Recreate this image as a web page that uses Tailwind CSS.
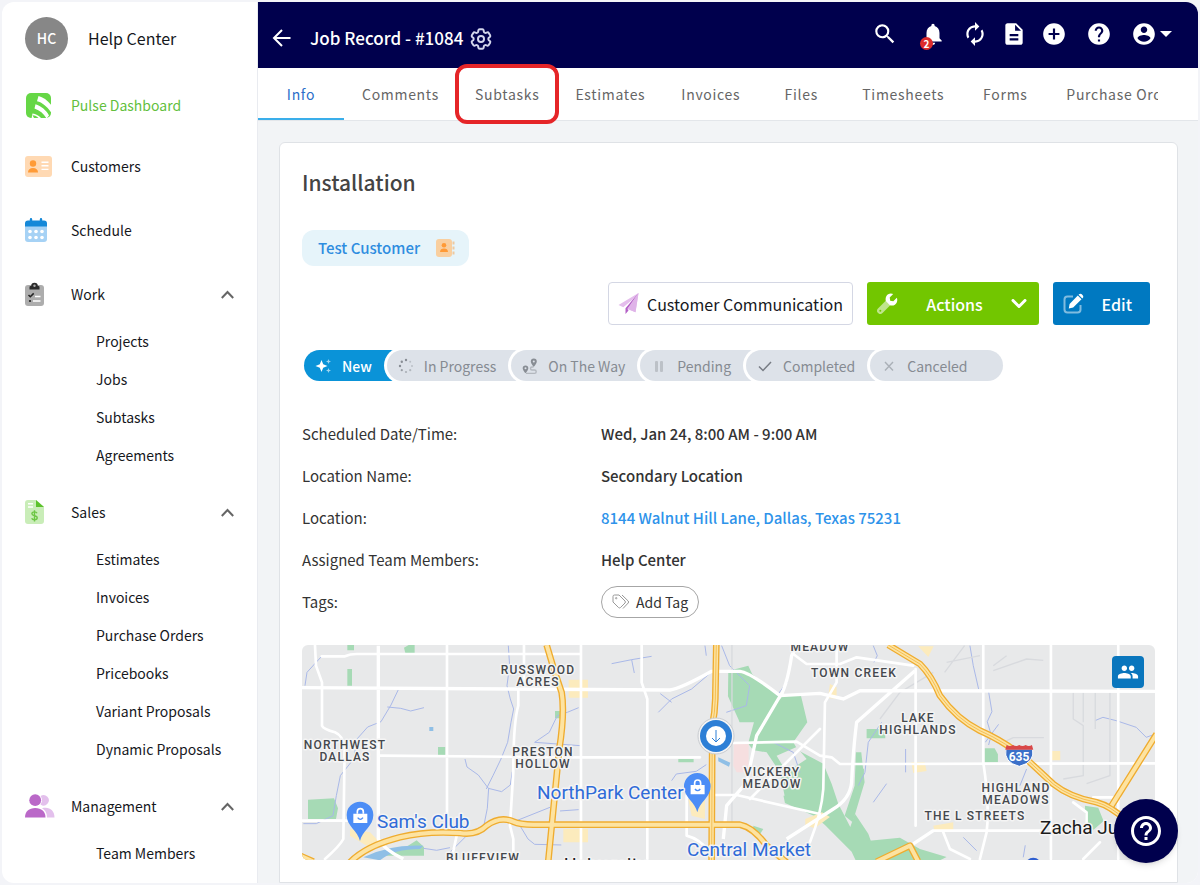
<!DOCTYPE html>
<html lang="en">
<head>
    <meta charset="UTF-8">
    <meta name="viewport" content="width=device-width, initial-scale=1.0">
    <title>Job Record - #1084</title>
    <script src="https://cdn.jsdelivr.net/npm/@tailwindcss/browser@4"></script>
</head>
<body class="bg-[#f3f4f8] font-['Noto_Sans_CJK_SC',sans-serif] text-[#16181d]">
<div class="h-screen p-[2px]">
    <div class="flex h-full overflow-hidden rounded-xl bg-white">

        <!-- Sidebar -->
        <aside class="w-64 shrink-0 overflow-hidden border-r border-[#e9ebf0]">
            <div class="flex h-[72px] items-center pl-[23px]">
                <div class="flex size-[43px] items-center justify-center rounded-full bg-[#878787] text-sm font-medium text-white">HC</div>
                <span class="ml-5 text-base">Help Center</span>
            </div>

            <a href="#" class="flex h-[62px] items-center pl-[23px] text-sm text-[#63bf3d]">
                <span class="w-[46px] pl-[1px]">
                    <svg class="size-[25px]" viewBox="0 0 25 25">
                        <rect width="25" height="25" rx="5" fill="#66d746"/>
                        <path d="M12.500 3C17 4.200 22 7.500 25.500 12.500V20C21 13.500 16.500 9.500 11 8.300zM9.500 11.300C15 13 20.500 17.500 23 22.500L20.500 25.500C18 21 14 17.500 8.500 15.500zM6.500 20.500C10 21 13 22.500 15.500 25.500H5.500z" fill="#fff"/>
                        <path d="M6.500 22.300C9 22.500 11 23.500 12.500 25H8z" fill="#66d746"/>
                    </svg>
                </span>
                Pulse Dashboard
            </a>

            <nav class="flex flex-col gap-2 pt-[2px] text-sm">
                <a href="#" class="flex h-14 items-center pl-[23px]">
                    <span class="w-[46px]">
                        <svg class="h-[21px] w-[27px]" viewBox="0 0 27 21">
                            <rect width="27" height="21" rx="3" fill="#ffd9b3"/>
                            <circle cx="8" cy="7.500" r="3.200" fill="#ff9b37"/>
                            <path d="M3 16.500C3 13.500 5 12 8 12s5 1.500 5 4.500z" fill="#ff9b37"/>
                            <path d="M16.500 6.200h7M16.500 9.800h7M16.500 13.400h7" stroke="#fff" stroke-width="1.400"/>
                        </svg>
                    </span>
                    Customers
                </a>
                <a href="#" class="flex h-14 items-center pl-[23px]">
                    <span class="w-[46px]">
                        <svg class="h-6 w-[22px]" viewBox="0 0 22 24">
                            <path d="M0 8h22v13a3 3 0 0 1-3 3H3a3 3 0 0 1-3-3z" fill="#a6d2f5"/>
                            <path d="M0 8.500V5.500a3 3 0 0 1 3-3h16a3 3 0 0 1 3 3v3z" fill="#1488d8"/>
                            <path d="M6 1.200v3M16 1.200v3" stroke="#1488d8" stroke-width="2.400" stroke-linecap="round"/>
                            <g fill="#fff"><circle cx="5" cy="13.500" r="1.800"/><circle cx="11" cy="13.500" r="1.800"/><circle cx="17" cy="13.500" r="1.800"/><circle cx="5" cy="19.500" r="1.800"/><circle cx="11" cy="19.500" r="1.800"/><circle cx="17" cy="19.500" r="1.800"/></g>
                        </svg>
                    </span>
                    Schedule
                </a>

                <section class="pb-[2px]">
                    <button type="button" aria-expanded="true" class="flex h-14 w-full items-center pr-[23px] pl-[23px] text-left">
                        <span class="w-[46px]">
                            <svg class="h-6 w-[19px]" viewBox="0 0 19 24">
                                <rect y="3" width="19" height="21" rx="3" fill="#adadad"/>
                                <path d="M4.500 7.500V5a1 1 0 0 1 1-1H6.200a3.300 3.300 0 0 1 6.600 0h.7a1 1 0 0 1 1 1v2.500z" fill="#2b2b2b"/>
                                <circle cx="9.500" cy="3.800" r="1.200" fill="#adadad"/>
                                <path d="M3.500 13l1.800 1.800 3.400-3.400" stroke="#222" stroke-width="1.500" fill="none"/>
                                <circle cx="5" cy="19" r="1.100" fill="#222"/>
                                <path d="M10 14.500h5.500M8 19h7.500" stroke="#fff" stroke-width="1.600"/>
                            </svg>
                        </span>
                        Work
                        <svg class="ml-auto h-[9px] w-[13px]" viewBox="0 0 13 9" fill="none" stroke="#666" stroke-width="2"><path d="M.8 8L6.500 2l5.700 6"/></svg>
                    </button>
                    <ul class="pl-[94px]">
                        <li><a href="#" class="flex h-[38px] items-center">Projects</a></li>
                        <li><a href="#" class="flex h-[38px] items-center">Jobs</a></li>
                        <li><a href="#" class="flex h-[38px] items-center">Subtasks</a></li>
                        <li><a href="#" class="flex h-[38px] items-center">Agreements</a></li>
                    </ul>
                </section>

                <section class="pb-[2px]">
                    <button type="button" aria-expanded="true" class="flex h-14 w-full items-center pr-[23px] pl-[23px] text-left">
                        <span class="w-[46px]">
                            <svg class="h-6 w-[19px]" viewBox="0 0 19 24">
                                <path d="M3 0h8l8 7v14a3 3 0 0 1-3 3H3a3 3 0 0 1-3-3V3a3 3 0 0 1 3-3z" fill="#c9edb8"/>
                                <path d="M11 0l8 7h-8z" fill="#5cc22c"/>
                                <path d="M3 3.800h5M3 7h5" stroke="#fff" stroke-width="1.500"/>
                                <path d="M12 13.300c-.4-1-1.400-1.400-2.600-1.400-1.400 0-2.500.7-2.500 1.900 0 2.600 5.300 1.300 5.300 4 0 1.300-1.200 2-2.700 2-1.300 0-2.400-.5-2.800-1.600M9.500 10.300v11.200" stroke="#6cc644" stroke-width="1.400" fill="none"/>
                            </svg>
                        </span>
                        Sales
                        <svg class="ml-auto h-[9px] w-[13px]" viewBox="0 0 13 9" fill="none" stroke="#666" stroke-width="2"><path d="M.8 8L6.500 2l5.700 6"/></svg>
                    </button>
                    <ul class="pl-[94px]">
                        <li><a href="#" class="flex h-[38px] items-center">Estimates</a></li>
                        <li><a href="#" class="flex h-[38px] items-center">Invoices</a></li>
                        <li><a href="#" class="flex h-[38px] items-center">Purchase Orders</a></li>
                        <li><a href="#" class="flex h-[38px] items-center">Pricebooks</a></li>
                        <li><a href="#" class="flex h-[38px] items-center">Variant Proposals</a></li>
                        <li><a href="#" class="flex h-[38px] items-center">Dynamic Proposals</a></li>
                    </ul>
                </section>

                <section>
                    <button type="button" aria-expanded="true" class="flex h-14 w-full items-center pr-[23px] pl-[23px] text-left">
                        <span class="w-[46px]">
                            <svg class="h-6 w-[30px]" viewBox="0 0 30 24">
                                <g fill="#e3c0ec"><path d="M15.500 2.100a5.200 5.200 0 1 1 0 8.400 7 7 0 0 0 0-8.400z"/><path d="M17 14.300c7-1.800 12.500 1.700 12.500 9.200H22c0-4-1.500-7.200-5-9.200z"/></g>
                                <circle cx="10.200" cy="6.200" r="5.900" fill="#ba68c8"/>
                                <path d="M0 23.500C0 17.500 4 14 10.200 14s10.300 3.500 10.300 9.500z" fill="#ba68c8"/>
                            </svg>
                        </span>
                        Management
                        <svg class="ml-auto h-[9px] w-[13px]" viewBox="0 0 13 9" fill="none" stroke="#666" stroke-width="2"><path d="M.8 8L6.500 2l5.700 6"/></svg>
                    </button>
                    <ul class="pl-[94px]">
                        <li><a href="#" class="flex h-[38px] items-center">Team Members</a></li>
                    </ul>
                </section>
            </nav>
        </aside>

        <main class="flex min-w-0 flex-1 flex-col">
            <!-- Top bar -->
            <header class="flex h-[66px] shrink-0 items-center bg-[#00004d] pr-[26px] pl-3 text-white">
                <button type="button" aria-label="Back" class="mt-1.5">
                    <svg class="size-6" viewBox="0 0 24 24" fill="none" stroke="currentColor" stroke-width="2"><path d="M20.500 12H4.500M12 4l-8 8 8 8"/></svg>
                </button>
                <h1 class="mt-1.5 ml-4 text-[17px] leading-6 font-medium">Job Record - #1084</h1>
                <button type="button" aria-label="Settings" class="mt-2 ml-[5px] text-[#d3d6ec]">
                    <svg class="size-[26px]" viewBox="0 0 24 24" fill="none" stroke="currentColor" stroke-width="1.800"><path d="M9.594 3.940c.09-.542.560-.940 1.110-.940h2.593c.550 0 1.020.398 1.110.940l.213 1.281c.063.374.313.686.645.870.074.040.147.083.220.127.325.196.720.257 1.075.124l1.217-.456a1.125 1.125 0 0 1 1.370.490l1.296 2.247a1.125 1.125 0 0 1-.260 1.431l-1.003.827c-.293.241-.438.613-.430.992a7.723 7.723 0 0 1 0 .255c-.008.378.137.750.430.991l1.004.827c.424.350.534.955.260 1.430l-1.298 2.247a1.125 1.125 0 0 1-1.369.491l-1.217-.456c-.355-.133-.750-.072-1.076.124a6.470 6.470 0 0 1-.220.128c-.331.183-.581.495-.644.869l-.213 1.281c-.090.543-.560.940-1.110.940h-2.594c-.550 0-1.019-.398-1.110-.940l-.213-1.281c-.062-.374-.312-.686-.644-.870a6.520 6.520 0 0 1-.220-.127c-.325-.196-.720-.257-1.076-.124l-1.217.456a1.125 1.125 0 0 1-1.369-.490l-1.297-2.247a1.125 1.125 0 0 1 .260-1.431l1.004-.827c.292-.240.437-.613.430-.991a6.932 6.932 0 0 1 0-.255c.007-.380-.138-.751-.430-.992l-1.004-.827a1.125 1.125 0 0 1-.260-1.430l1.297-2.247a1.125 1.125 0 0 1 1.370-.491l1.216.456c.356.133.751.072 1.076-.124.072-.044.146-.086.220-.128.332-.183.582-.495.644-.869l.214-1.280Z"/><circle cx="12" cy="12" r="2.800"/></svg>
                </button>

                <div class="mb-[2px] ml-auto flex items-center">
                    <button type="button" aria-label="Search" class="flex w-12 justify-center">
                        <svg class="size-[26px]" viewBox="0 0 24 24" fill="currentColor"><path d="M15.500 14h-.790l-.280-.270A6.471 6.471 0 0 0 16 9.500 6.500 6.500 0 1 0 9.500 16c1.610 0 3.090-.590 4.230-1.570l.270.280v.790l5 4.990L20.490 19l-4.990-5zm-6 0C7.010 14 5 11.990 5 9.500S7.010 5 9.500 5 14 7.010 14 9.500 11.990 14 9.500 14z"/></svg>
                    </button>
                    <button type="button" aria-label="Notifications" class="relative flex w-12 justify-center">
                        <svg class="size-[26px]" viewBox="0 0 24 24" fill="currentColor"><path d="M12 22c1.100 0 2-.900 2-2h-4c0 1.100.890 2 2 2zm6-6v-5c0-3.070-1.640-5.640-4.500-6.320V4c0-.830-.670-1.500-1.500-1.500s-1.500.670-1.500 1.500v.680C7.630 5.360 6 7.920 6 11v5l-2 2v1h16v-1l-2-2z"/></svg>
                        <span class="absolute -bottom-[3px] left-[11px] flex size-[13px] items-center justify-center rounded-full bg-[#dd2c2c] text-[10px] leading-3 font-bold">2</span>
                    </button>
                    <button type="button" aria-label="Refresh" class="flex w-9 justify-center">
                        <svg class="size-[26px]" viewBox="0 0 24 24" fill="currentColor"><path d="M12 6v3l4-4-4-4v3c-4.420 0-8 3.580-8 8 0 1.570.460 3.030 1.240 4.260L6.700 14.800c-.450-.830-.700-1.790-.700-2.800 0-3.310 2.690-6 6-6zm6.760 1.740L17.300 9.200c.440.840.700 1.790.700 2.800 0 3.310-2.690 6-6 6v-3l-4 4 4 4v-3c4.420 0 8-3.580 8-8 0-1.570-.460-3.030-1.240-4.260z"/></svg>
                    </button>
                    <button type="button" aria-label="Documents" class="flex w-[42px] justify-center">
                        <svg class="size-[26px]" viewBox="0 0 24 24" fill="currentColor"><path d="M14 2H6c-1.100 0-1.990.900-1.990 2L4 20c0 1.100.890 2 1.990 2H18c1.100 0 2-.900 2-2V8l-6-6zm2 16H8v-2h8v2zm0-4H8v-2h8v2zm-3-5V3.500L18.500 9H13z"/></svg>
                    </button>
                    <button type="button" aria-label="Add" class="flex w-[38px] justify-center">
                        <svg class="size-[26px]" viewBox="0 0 24 24" fill="currentColor"><path d="M12 2C6.480 2 2 6.480 2 12s4.480 10 10 10 10-4.480 10-10S17.520 2 12 2zm5 11h-4v4h-2v-4H7v-2h4V7h2v4h4v2z"/></svg>
                    </button>
                    <button type="button" aria-label="Help" class="flex w-[52px] justify-center">
                        <svg class="size-[26px]" viewBox="0 0 24 24" fill="currentColor"><path d="M12 2C6.480 2 2 6.480 2 12s4.480 10 10 10 10-4.480 10-10S17.520 2 12 2zm1 17h-2v-2h2v2zm2.070-7.750l-.900.920C13.450 12.900 13 13.500 13 15h-2v-.500c0-1.100.450-2.100 1.170-2.830l1.240-1.260c.370-.360.590-.860.590-1.410 0-1.100-.900-2-2-2s-2 .900-2 2H8c0-2.210 1.790-4 4-4s4 1.790 4 4c0 .880-.360 1.680-.930 2.250z"/></svg>
                    </button>
                    <button type="button" aria-label="Account" class="ml-[6px] flex items-center">
                        <svg class="size-[26px]" viewBox="0 0 24 24" fill="currentColor"><path d="M12 2C6.480 2 2 6.480 2 12s4.480 10 10 10 10-4.480 10-10S17.520 2 12 2zm0 3c1.660 0 3 1.340 3 3s-1.340 3-3 3-3-1.340-3-3 1.340-3 3-3zm0 14.200c-2.500 0-4.710-1.280-6-3.220.030-1.990 4-3.080 6-3.080 1.990 0 5.970 1.090 6 3.080-1.290 1.940-3.500 3.220-6 3.220z"/></svg>
                        <svg class="ml-[3px] h-[6px] w-[12px]" viewBox="0 0 12 6" fill="currentColor"><path d="M0 0h12L6 6z"/></svg>
                    </button>
                </div>
            </header>

            <!-- Tabs -->
            <nav class="h-[53px] shrink-0 border-b border-[#e3e6ea] pr-10">
                <div class="flex h-full overflow-x-clip text-sm tracking-wider whitespace-nowrap text-[#666]">
                    <a href="#" class="flex min-w-[86px] shrink-0 items-center justify-center border-b-2 border-[#3aaeea] px-[18px] pt-[2px] text-[#2b6fc9]">Info</a>
                    <a href="#" class="flex min-w-[86px] shrink-0 items-center justify-center px-[18px]">Comments</a>
                    <a href="#" class="relative flex min-w-[86px] shrink-0 items-center justify-center px-[18px]">
                        Subtasks
                        <span class="absolute -inset-x-[2px] -inset-y-1 rounded-xl border-4 border-[#e52528]"></span>
                    </a>
                    <a href="#" class="flex min-w-[86px] shrink-0 items-center justify-center px-[18px]">Estimates</a>
                    <a href="#" class="flex min-w-[86px] shrink-0 items-center justify-center px-[18px]">Invoices</a>
                    <a href="#" class="flex min-w-[86px] shrink-0 items-center justify-center px-[18px]">Files</a>
                    <a href="#" class="flex min-w-[86px] shrink-0 items-center justify-center px-[18px]">Timesheets</a>
                    <a href="#" class="flex min-w-[86px] shrink-0 items-center justify-center px-[18px]">Forms</a>
                    <a href="#" class="flex min-w-[86px] shrink-0 items-center justify-center px-[18px]">Purchase Orders</a>
                </div>
            </nav>

            <div class="flex-1 overflow-hidden bg-[#f2f4f6] pt-[21px] pr-5 pl-[21px]">
                <div class="h-full rounded-t-md border border-[#dfe2e6] bg-white px-[22px] pt-[21px]">
                    <h2 class="text-[21px] leading-9 font-medium text-[#444]">Installation</h2>

                    <a href="#" class="mt-[30px] inline-flex h-9 items-center rounded-xl bg-[#e6f4fa] pr-[14px] pl-4 text-[15px] font-medium text-[#2e8de0]">
                        Test Customer
                        <svg class="ml-4 h-5 w-[19px]" viewBox="0 0 19 20">
                            <rect y="1" width="16" height="18" rx="3" fill="#f9cf9f"/>
                            <path d="M17.500 3.500v3M17.500 8.500v3M17.500 13.500v3" stroke="#eec9a0" stroke-width="2"/>
                            <circle cx="8" cy="7.300" r="2.300" fill="#ff9a35"/>
                            <path d="M4 14c0-2.400 1.700-3.500 4-3.500s4 1.100 4 3.500z" fill="#ff9a35"/>
                        </svg>
                    </a>

                    <div class="mt-4 flex justify-end gap-[14px] pr-[5px] text-base">
                        <button type="button" class="flex h-[43px] items-center rounded border border-[#d4d7e4] px-[9px]">
                            <svg class="mr-2 size-[21px]" viewBox="0 0 20 21">
                                <path d="M20 0L0 12l4.800 2.200L16 5 7.500 15.500l9.500 3.800z" fill="#e4bdec"/>
                                <path d="M20 0L7 15.200V21l3-3.500L9 16z" fill="#b35fc6"/>
                                <path d="M20 0L9 15.700l8 3.600z" fill="#dfb3e8"/>
                            </svg>
                            Customer Communication
                        </button>
                        <button type="button" class="flex h-[43px] w-[172px] items-center rounded-[3px] bg-[#72c600] pr-3 pl-[10px] font-medium text-white">
                            <svg class="size-[21px]" viewBox="0 0 21 21">
                                <path d="M9 7.500l4.500 4.500-8 8a3.100 3.100 0 0 1-4.500-4.400z" fill="#fff" opacity=".55"/>
                                <path d="M19.800 4.700l-3.500 3.500-3.100-.5-.5-3.100L16.200 1C13.500-.2 10.500.8 9.300 3.300c-1 2-.8 3.700-.3 5l3.900 3.900c1.800.6 3.500.5 5-.5 2.200-1.500 3-4.600 1.900-7z" fill="#fff"/>
                                <circle cx="3.300" cy="17.700" r="1" fill="#72c600"/>
                            </svg>
                            <span class="flex-1 text-center">Actions</span>
                            <svg class="h-[10px] w-4" viewBox="0 0 16 10" fill="none" stroke="currentColor" stroke-width="3" stroke-linecap="round" stroke-linejoin="round"><path d="M2 1.500l6 6 6-6"/></svg>
                        </button>
                        <button type="button" class="flex h-[43px] w-[97px] items-center rounded-[3px] bg-[#0079c1] pr-[18px] pl-[10px] font-medium text-white">
                            <svg class="size-[21px]" viewBox="0 0 21 21">
                                <path d="M10 3.500H4.500a3 3 0 0 0-3 3v10a3 3 0 0 0 3 3h10a3 3 0 0 0 3-3V12" fill="none" stroke="#fff" stroke-width="2" opacity=".5"/>
                                <path d="M14.800 2.500l3.700 3.700-8.300 8.300-4.400.9.800-4.500zM16 1.300c.8-.8 2-.8 2.800 0l.9.900c.8.8.8 2 0 2.800l-.4.4-3.700-3.700z" fill="#fff"/>
                            </svg>
                            <span class="ml-auto">Edit</span>
                        </button>
                    </div>

                    <!-- Status steps, each one overlaps the end of the one before -->
                    <div class="mt-[25px] ml-[2px] flex text-sm text-[#868b92]">
                        <button type="button" class="flex h-[31px] items-center gap-2 rounded-l-full bg-[#0a93d8] pr-[35px] pl-[10px] font-medium text-white">
                            <svg class="size-5" viewBox="0 0 20 20" fill="currentColor"><path d="M7.500 4l1.700 4.300L13.500 10l-4.300 1.700L7.500 16l-1.700-4.300L1.500 10l4.300-1.700z"/><path d="M14.500 3l.7 1.800 1.800.7-1.800.7-.7 1.800-.7-1.800-1.800-.7 1.800-.7zM14.500 12l.7 1.800 1.800.7-1.800.7-.7 1.800-.7-1.800-1.800-.7 1.800-.7z" opacity=".6"/></svg>
                            New
                        </button>
                        <button type="button" class="-ml-5 flex h-[31px] items-center gap-[9px] rounded-l-full bg-[#dde2e9] pr-[35px] pl-[10px] ring-3 ring-white">
                            <svg class="size-[18px]" viewBox="0 0 18 18" fill="#888d94"><circle cx="9" cy="3" r="1.200"/><circle cx="4.800" cy="4.800" r="1.200"/><circle cx="3" cy="9" r="1.200"/><circle cx="4.800" cy="13.200" r="1.100" opacity=".8"/><circle cx="9" cy="15" r="1.100" opacity=".6"/><circle cx="13.200" cy="13.200" r="1.100" opacity=".5"/><circle cx="15" cy="9" r="1" opacity=".4"/><circle cx="13.200" cy="4.800" r="1" opacity=".4"/></svg>
                            In Progress
                        </button>
                        <button type="button" class="-ml-5 flex h-[31px] items-center gap-[9px] rounded-l-full bg-[#dde2e9] pr-[35px] pl-[10px] ring-3 ring-white">
                            <svg class="size-[18px]" viewBox="0 0 18 18" fill="none"><path d="M12.500 10H11a1.500 1.500 0 0 0 0 3h2.500a1.700 1.700 0 0 1 0 3.400H5" stroke="#b3b8be" stroke-width="1.400"/><path d="M12.800 1.500a3 3 0 0 1 3 3c0 2-3 5.300-3 5.300s-3-3.300-3-5.300a3 3 0 0 1 3-3zM4.500 8.500a2.800 2.800 0 0 1 2.800 2.800c0 1.900-2.800 5-2.800 5s-2.800-3.100-2.800-5a2.800 2.800 0 0 1 2.800-2.800z" fill="#888d94"/><circle cx="12.800" cy="4.500" r="1" fill="#dde2e9"/><circle cx="4.500" cy="11.300" r="1" fill="#dde2e9"/></svg>
                            On The Way
                        </button>
                        <button type="button" class="-ml-5 flex h-[31px] items-center gap-[9px] rounded-l-full bg-[#dde2e9] pr-[35px] pl-[10px] ring-3 ring-white">
                            <svg class="size-[18px]" viewBox="0 0 18 18" fill="#bcc1c7"><rect x="5" y="4" width="3" height="11" rx="1"/><rect x="10" y="4" width="3" height="11" rx="1"/></svg>
                            Pending
                        </button>
                        <button type="button" class="-ml-5 flex h-[31px] items-center gap-[9px] rounded-l-full bg-[#dde2e9] pr-[35px] pl-[10px] ring-3 ring-white">
                            <svg class="size-[18px]" viewBox="0 0 18 18" fill="none" stroke="#777c84" stroke-width="1.500"><path d="M3 9.500l4 4 8-8.500"/></svg>
                            Completed
                        </button>
                        <button type="button" class="-ml-5 flex h-[31px] items-center gap-[9px] rounded-full bg-[#dde2e9] pr-[35px] pl-[10px] ring-3 ring-white">
                            <svg class="size-[18px]" viewBox="0 0 18 18" fill="none" stroke="#aab0b7" stroke-width="1.400"><path d="M5 5l8 8.500M13 5l-8 8.500"/></svg>
                            Canceled
                        </button>
                    </div>

                    <dl class="mt-8 grid grid-cols-[299px_1fr] text-[15px] text-[#333]">
                        <dt class="flex h-[42px] items-center">Scheduled Date/Time:</dt>
                        <dd class="flex h-[42px] items-center font-medium">Wed, Jan 24, 8:00 AM - 9:00 AM</dd>
                        <dt class="flex h-[42px] items-center">Location Name:</dt>
                        <dd class="flex h-[42px] items-center font-medium">Secondary Location</dd>
                        <dt class="flex h-[42px] items-center">Location:</dt>
                        <dd class="flex h-[42px] items-center"><a href="#" class="font-medium text-[#2e93ea]">8144 Walnut Hill Lane, Dallas, Texas 75231</a></dd>
                        <dt class="flex h-[42px] items-center">Assigned Team Members:</dt>
                        <dd class="flex h-[42px] items-center font-medium">Help Center</dd>
                        <dt class="flex h-[42px] items-center">Tags:</dt>
                        <dd class="flex h-[42px] items-center">
                            <button type="button" class="flex h-8 items-center gap-[6px] rounded-full border border-[#a6a6a6] px-[10px] text-sm">
                                <svg class="h-4 w-[18px]" viewBox="0 0 18 16" fill="none" stroke="#999" stroke-width="1"><path d="M1 2.500A1.500 1.500 0 0 1 2.500 1H7l6 6a1.500 1.500 0 0 1 0 2l-4.500 4.500a1.500 1.500 0 0 1-2 0L1 8z"/><path d="M10 1l6.200 6a1.500 1.500 0 0 1 0 2l-5.200 5.500"/><circle cx="4.200" cy="4.200" r=".7"/></svg>
                                Add Tag
                            </button>
                        </dd>
                    </dl>

                    <!-- Map -->
                    <div class="relative mt-[22px] h-[215px] overflow-hidden rounded-md bg-[#e8e9ea]">
                        <svg class="h-full w-full" viewBox="0 0 854 215" preserveAspectRatio="xMinYMin slice" role="img" aria-label="Map of north Dallas">
                            <g transform="translate(-2 -6) scale(.3333)" fill="none" stroke-linejoin="round">
                                <!-- parks -->
                                <g fill="#a6dab5">
                                    <path d="M142 18h20v16h-20zM312 26l14-8h18v24h-28zM142 90h14v50h-14zM414 324h22v24h-22zM24 482l78-4 12 30-6 32H24zM240 650q60-10 110-46l22 20v26z"/>
                                    <path d="M765 216h16v22h-16zM1285 96l60-16 12 26 85 64 60-4 20 84-42 60 14 24 76 40 25 60 20 60 36 70 14-40 40 60 50 140h-60l-40-86-80-80-30-26-90-40-14-70-40-10-5-40-30-30-30-40-20-60-32-70z"/>
                                    <path d="M1668 340h16l10 90-36 120-24-20 30-90zM1700 270h56v28h-56zM2054 328h30l10 18v24h-40zM2355 500l40 6 16 40-30 26-24-20zM1680 570l20 36 100-10 60 34 80 24-20 10h-240zM1680 380l12 10v40l-12 20zM1135 360h46v10h-46zM1360 560l30 10-10 16-20-6z"/>
                                </g>
                                <!-- built-up blocks between the parks -->
                                <path d="M1296 250l66 0-22 80 60 10 40 60 14 70h-170zM1430 350l60-26 30 36-60 40z" fill="#e8e9ea"/>
                                <path d="M1302 314l44-4v90h-36l-10-20z" fill="#f6dfe0"/>
                                <g fill="#fcebbd">
                                    <path d="M806 122h58v54h-58zM790 570h74v40h-74zM150 570l60 10 30 30-40 10-50-30zM1590 135l20 10v34l-26-2zM1516 540l50-20 24 14-46 34-28-10zM1834 370h40l6 26-40 6zM2255 336h26v28h-26zM1855 22h46l-16 32zM1900 560l60-10v26h-56zM1165 480h50v60l-40-10z"/>
                                </g>
                                <path d="M190 655q80-40 180-35l-10 10q-80 0-120 34zM1255 355l36 16-4 12-32-16zM388 264h12v12h-12z" fill="#8fbfe6"/>

                                <!-- creeks -->
                                <g stroke="#a9b8e8" stroke-width="3">
                                    <path d="M15 140l6-40 20-22 24-26M295 152l-22 46-30 50-40 16-32 36-10 60-40 50-12 60-10 60-50 24H10M262 204l40 4 30 8 40-10M625 20l4 60-8 60 10 40 10 30-8 40-10 60-20 50-24 50-20 40M495 360l6 24 34 24 30 40 40 10 26-20 6-40M566 448l-4 60-10 50-50 30-60 60M836 206l-34 14-30 10-24 50-44 30 136 10M370 628l40 6 40-8M660 560l24 40 20 16 80 2M780 516l56-4M650 545l100-40"/>
                                    <path d="M935 74l60-12 60-10M995 62l8 40M1075 220l40-40 60-30 54-46M1115 190l-34-26M1215 20l4 30M1265 20l24 60 60 60-10 60-60 20M1115 425l14-20 60-8 30-20M1475 50l-14 80-30 40M1720 20l12 30-10 20M1745 250l-40 60-10 90-20 40M1420 310l60 30 20 60"/>
                                    <path d="M2010 20l10 60 16 70M2066 158l10 60-14 30 12 40-8 30M2056 310l40-54M2385 245l24-10 40 10 60 20 30 30 28-10M1817 330v70M1720 490l40-56M1990 595l40 40M2170 655l6-36M2160 440l20-50"/>
                                </g>

                                <!-- side streets -->
                                <g stroke="#d8dade" stroke-width="4">
                                    <path d="M1296 18V560M1934 100l60-80M1940 70l100-20M2080 95l100-35 50 4M2080 80l40-30M2110 310l30-14h92M2320 160v80l30 20v150l-60 10M2350 160v90M2386 160v110M2430 160v250l-70 24M1740 240l60-80 100-60"/>
                                </g>

                                <!-- streets -->
                                <g stroke="#fff" stroke-width="8" stroke-linecap="round">
                                    <path d="M65 52h70q15-7 35-7h670M240 350l600 5h360M672 20v130M655 150v50q-15 50-15 200l-10 160 10 40v60M843 20v640M441 20v535l29 35-15 70M6 545h134M45 20l3 60 18 50v130q4 10 39 20 25 10 29 50l-4 270q-10 20-55 60"/>
                                    <path d="M1025 20v110l17 50v480M1160 470v120q40 10 70 50M1240 468h70l250 57M1300 312l190-4 70 42 35 5 25 20h120l828-2M1610 20v110l-35 60-5 260q-5 70-40 160M1560 270l-210 210M1480 45l40 30h100l50-20 170 25"/>
                                    <path d="M1847 90v470M2050 20v350q20 130 10 210l-20 80M2253 20v640M2455 20v640M1900 575h330M1930 580l20 50 60 30M2400 610l-50 50M2380 475h80M2320 490l40 30v50"/>
                                </g>
                                <g stroke="#fff" stroke-width="10">
                                    <path d="M6 146l1104 7q30-3 125-56h85q30 3 120 73l120-7 70 17 50-25 888 2M235 20v580q15 30 75 60M1490 20l-15 30q-15 100-40 130l-65 110q-15 70-30 140l-60 70-10 100M1845 95l-175 155q-10 80-15 180-5 50-55 80l-140 90M1840 615l60-40"/>
                                </g>

                                <!-- highways: casing, then fill -->
                                <g stroke="#efac2f" stroke-width="20">
                                    <path d="M150 670q50-50 150-75 80-20 180-13 50 8 80-22 40-30 80-12 20 9 60 9h620q40 8 80 63l60 50M2570 285l-135 215M1730 668l100-48 24 46M0 650l40 18"/>
                                    <path d="M740 18q20 72 45 142 10 60-7 170l-33 335M1249 18l-3 162q-1 40-9 80l-2 405M1765 18l95 57q35 35 60 95 50 70 120 105 80 35 150 95l70 65q50 40 130 55 40 10 90 55"/>
                                </g>
                                <g stroke="#fde3a1" stroke-width="12">
                                    <path d="M150 670q50-50 150-75 80-20 180-13 50 8 80-22 40-30 80-12 20 9 60 9h620q40 8 80 63l60 50M2570 285l-135 215M1730 668l100-48 24 46M0 650l40 18"/>
                                    <path d="M740 18q20 72 45 142 10 60-7 170l-33 335M1249 18l-3 162q-1 40-9 80l-2 405M1765 18l95 57q35 35 60 95 50 70 120 105 80 35 150 95l70 65q50 40 130 55 40 10 90 55"/>
                                </g>
                                <path d="M1249 18l-3 162q-1 40-9 80l-2 405M1765 18l95 57q35 35 60 95 50 70 120 105 80 35 150 95l70 65q50 40 130 55 40 10 90 55" stroke="#efac2f" stroke-width="2"/>

                                <!-- shop pins -->
                                <g>
                                    <path d="M180 606c-6-30-40-44-40-78a40 40 0 0 1 80 0c0 34-34 48-40 78zM1192 520c-6-30-40-44-40-78a40 40 0 0 1 80 0c0 34-34 48-40 78z" fill="#4c8df6"/>
                                    <path d="M160 524h42v28h-42zM1172 438h42v28h-42z" fill="#fff"/>
                                    <path d="M172 524v-6a9 9 0 0 1 18 0v6M1184 438v-6a9 9 0 0 1 18 0v6" stroke="#fff" stroke-width="5"/>
                                    <path d="M173 536q8 10 16 0M1185 450q8 10 16 0" stroke="#4c8df6" stroke-width="4"/>
                                </g>

                                <!-- interstate shield -->
                                <path d="M2118 330q-8 40 40 52 48-12 40-52z" fill="#3b70c9" stroke="#fff" stroke-width="3"/>
                                <path d="M2120 318q10 6 19 0 10 6 19 0 10 6 19 0 10 6 19 0l4 14h-84z" fill="#d94848"/>
                                <circle cx="2200" cy="680" r="24" fill="#2f5fd0"/>
                            </g>

                            <g class="font-[Roboto,sans-serif] text-[12px] font-medium tracking-widest" text-anchor="middle" fill="#44484d" stroke="#f4f4f4" stroke-width="3" paint-order="stroke" stroke-linejoin="round">
                                <text x="236" y="29">RUSSWOOD</text><text x="236" y="41">ACRES</text>
                                <text x="43" y="104">NORTHWEST</text><text x="43" y="116">DALLAS</text>
                                <text x="241" y="111">PRESTON</text><text x="241" y="123">HOLLOW</text>
                                <text x="181" y="217">BLUFFVIEW</text>
                                <text x="518" y="6">MEADOW</text>
                                <text x="552" y="32">TOWN CREEK</text>
                                <text x="470" y="131">VICKERY</text><text x="470" y="143">MEADOW</text>
                                <text x="616" y="77">LAKE</text><text x="616" y="89">HIGHLANDS</text>
                                <text x="714" y="147">HIGHLAND</text><text x="714" y="159">MEADOWS</text>
                                <text x="673" y="175">THE L STREETS</text>
                            </g>
                            <text x="717" y="116" text-anchor="middle" fill="#fff" class="font-[Roboto,sans-serif] text-[12px] font-bold">635</text>
                            <g class="font-[Roboto,sans-serif] text-[19px]" fill="#2f6bd8" stroke="#f4f4f4" stroke-width="3" paint-order="stroke" stroke-linejoin="round">
                                <text x="75" y="183">Sam's Club</text>
                                <text x="235" y="154">NorthPark Center</text>
                                <text x="385" y="211">Central Market</text>
                                <text x="738" y="189" fill="#1b1b1b">Zacha Junction</text>
                                <text x="262" y="226" fill="#1b1b1b">University</text>
                            </g>

                            <!-- job location -->
                            <circle cx="414" cy="91" r="18" fill="#f4f4f4" stroke="#c9ccd0" stroke-width="1"/>
                            <circle cx="414" cy="91" r="16" fill="#2d7fd6"/>
                            <circle cx="414" cy="91" r="10" fill="#fff"/>
                            <path d="M414 85v12M410 93l4 4 4-4" fill="none" stroke="#2d7fd6" stroke-width="1"/>
                        </svg>
                        <button type="button" aria-label="Team on map" class="absolute top-[11px] right-[11px] flex size-8 items-center justify-center rounded bg-[#0a76bd] text-white">
                            <svg class="size-[22px]" viewBox="0 0 24 24" fill="currentColor"><path d="M16 11c1.660 0 2.990-1.340 2.990-3S17.660 5 16 5c-1.660 0-3 1.340-3 3s1.340 3 3 3zm-8 0c1.660 0 2.990-1.340 2.990-3S9.660 5 8 5C6.340 5 5 6.340 5 8s1.340 3 3 3zm0 2c-2.330 0-7 1.170-7 3.500V19h14v-2.500c0-2.330-4.670-3.500-7-3.500zm8 0c-.290 0-.620.020-.970.050 1.160.840 1.970 1.970 1.970 3.450V19h6v-2.500c0-2.330-4.670-3.500-7-3.500z"/></svg>
                        </button>
                    </div>
                </div>
            </div>
        </main>
    </div>
</div>

<button type="button" aria-label="Help center" class="fixed right-[22px] bottom-[22px] flex size-16 items-center justify-center rounded-full bg-[#00004d] text-white shadow-md">
    <svg class="size-9" viewBox="0 0 24 24" fill="currentColor"><path d="M11 18h2v-2h-2v2zm1-16C6.480 2 2 6.480 2 12s4.480 10 10 10 10-4.480 10-10S17.520 2 12 2zm0 18c-4.410 0-8-3.590-8-8s3.590-8 8-8 8 3.590 8 8-3.590 8-8 8zm0-14c-2.210 0-4 1.790-4 4h2c0-1.100.900-2 2-2s2 .900 2 2c0 2-3 1.750-3 5h2c0-2.250 3-2.500 3-5 0-2.210-1.790-4-4-4z"/></svg>
</button>
</body>
</html>
